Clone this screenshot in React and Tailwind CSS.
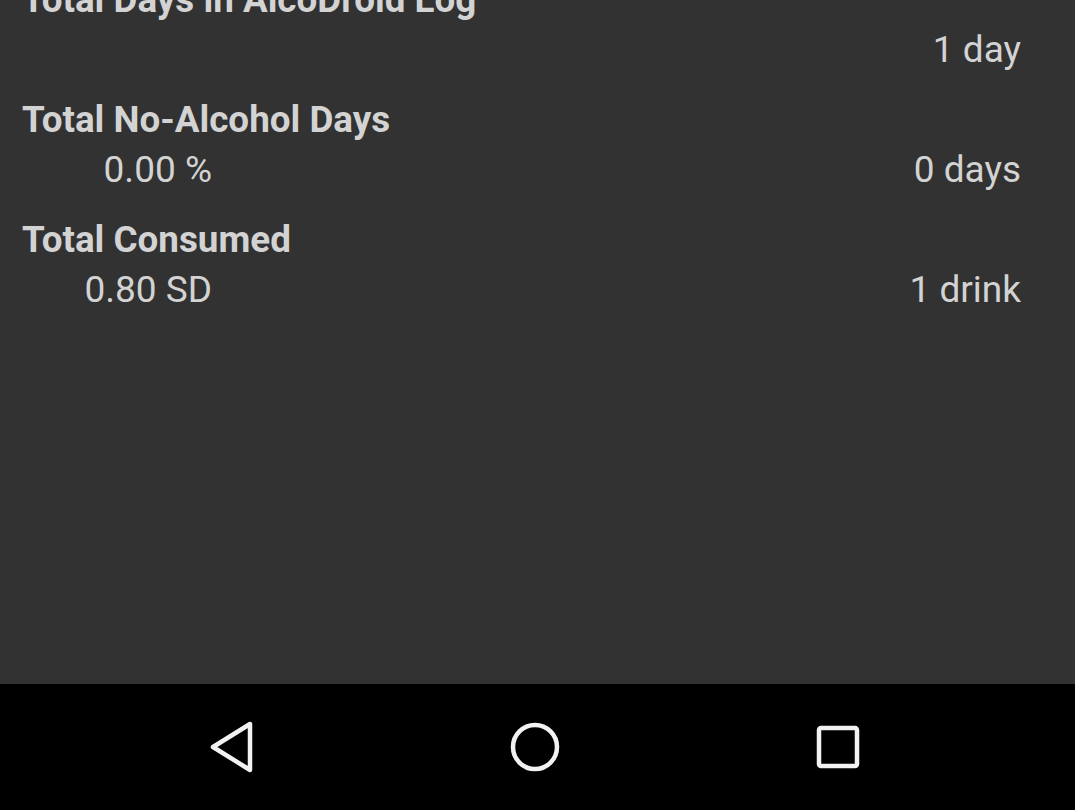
export default function App() {
  const rows = [
    { title: 'Total Days in AlcoDroid Log', left: '', right: '1 day' },
    { title: 'Total No-Alcohol Days', left: '0.00 %', right: '0 days' },
    { title: 'Total Consumed', left: '0.80 SD', right: '1 drink' },
  ];

  return (
    <div
      className="w-[1075px] h-[810px] flex flex-col overflow-hidden bg-black"
      style={{ fontFamily: 'Roboto, "Noto Sans", sans-serif' }}
    >
      <div className="h-[684px] bg-[#323232] overflow-hidden">
        <div className="flex flex-col gap-[30px] -mt-[20px]">
          {rows.map((r) => (
            <div key={r.title} className="flex flex-col gap-[10px]">
              <div className="pl-[22px] text-[36.8px] leading-[40px] font-bold text-[#d3d3d3] whitespace-nowrap">
                {r.title}
              </div>
              <div className="flex items-center justify-between pr-[54px] text-[37px] leading-[40px] text-[#d3d3d3]">
                <span className="w-[212px] text-right">{r.left}</span>
                <span>{r.right}</span>
              </div>
            </div>
          ))}
        </div>
      </div>

      <div className="flex-1 flex items-center justify-center bg-black pr-[5px]">
        <div className="flex items-center justify-between w-[652px]">
          <svg width="46" height="52" viewBox="0 0 46 52" className="text-[#f2f2f2]">
            <path
              d="M41 3 L41 49 L4 26 Z"
              fill="none"
              stroke="currentColor"
              strokeWidth="4.5"
              strokeLinejoin="round"
            />
          </svg>
          <svg width="52" height="52" viewBox="0 0 52 52" className="text-[#f2f2f2]">
            <circle cx="26" cy="26" r="22" fill="none" stroke="currentColor" strokeWidth="4.5" />
          </svg>
          <svg width="46" height="46" viewBox="0 0 46 46" className="text-[#f2f2f2]">
            <rect
              x="4"
              y="4"
              width="38"
              height="38"
              rx="2"
              fill="none"
              stroke="currentColor"
              strokeWidth="4.5"
            />
          </svg>
        </div>
      </div>
    </div>
  );
}
